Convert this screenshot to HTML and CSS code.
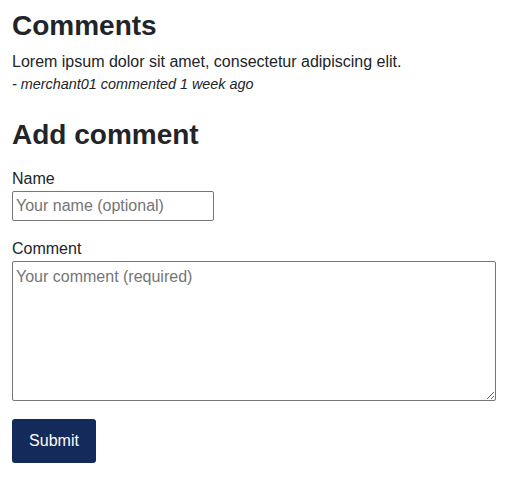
FILE: index.html
```
<!DOCTYPE html>
<html lang="en">
<head>
<meta charset="utf-8">
<title>Comments</title>
<link rel="stylesheet" href="styles.css">
</head>
<body>
<section class="comments">
  <h2 class="title">Comments</h2>
  <div class="comment">
    <p class="comment-text">Lorem ipsum dolor sit amet, consectetur adipiscing elit.</p>
    <p class="comment-meta">- merchant01 commented 1 week ago</p>
  </div>
</section>
<section class="add">
  <h2 class="title">Add comment</h2>
  <form class="form">
    <label class="field">
      <span class="label">Name</span>
      <input class="input name" type="text" placeholder="Your name (optional)">
    </label>
    <label class="field">
      <span class="label">Comment</span>
      <textarea class="input textarea" placeholder="Your comment (required)"></textarea>
    </label>
    <div class="actions">
      <button class="btn" type="button">Submit</button>
    </div>
  </form>
</section>
</body>
</html>
```
FILE: styles.css
```
* { box-sizing: border-box; }
body {
  margin: 0;
  padding: 9px 12px 0;
  font-family: "Liberation Sans", Arial, sans-serif;
  font-size: 16px;
  line-height: 1.5;
  color: #212529;
  background: #fff;
}
.title {
  margin: 0 0 7px;
  font-size: 28px;
  line-height: 1.2;
  font-weight: 700;
}
.comment-text { margin: 0; }
.comment-meta {
  margin: 0;
  font-size: 14.4px;
  line-height: 21px;
  font-style: italic;
}
.add { margin-top: 23px; }
.add .title { margin-bottom: 16px; }
.form { display: flex; flex-direction: column; }
.field { display: flex; flex-direction: column; align-items: flex-start; margin-bottom: 16px; }
.label { display: block; }
.input {
  font-family: "Liberation Sans", Arial, sans-serif;
  font-size: 16px;
  color: #212529;
  border: 1px solid #767676;
  border-radius: 2px;
  padding: 2px 3px;
  background: #fff;
}
.input::placeholder { color: #757575; }
.name { width: 202px; height: 30px; }
.textarea { width: 484px; height: 140px; line-height: 1.5; padding: 3px 3px; resize: vertical; }
.actions { margin-top: 2px; }
.btn {
  font-family: "Liberation Sans", Arial, sans-serif;
  font-size: 16px;
  line-height: 24px;
  color: #fff;
  background: #132a5b;
  border: 0;
  border-radius: 3px;
  padding: 10px 17px;
  width: 84px;
}
```
